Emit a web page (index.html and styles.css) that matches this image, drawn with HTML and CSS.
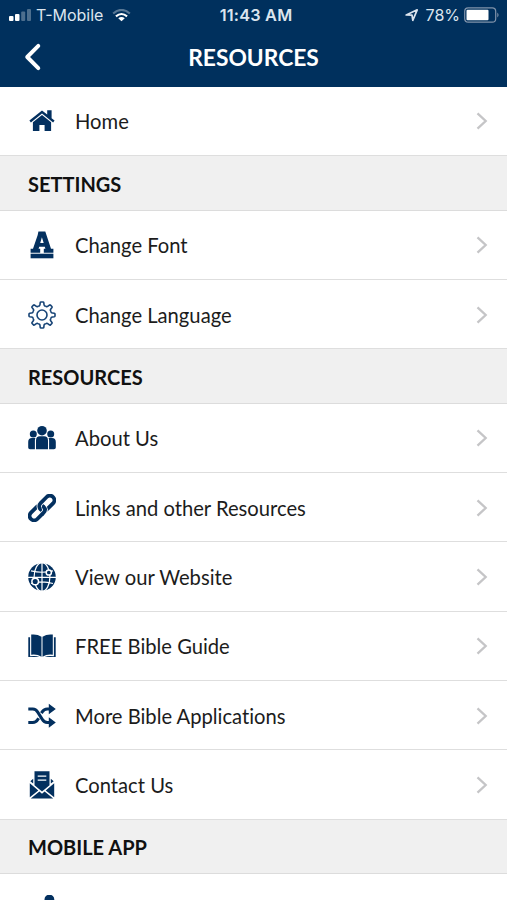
FILE: index.html
```html
<!DOCTYPE html>
<html lang="en">
<head>
<meta charset="utf-8">
<title>Resources</title>
<link rel="stylesheet" href="styles.css">
</head>
<body>
<svg class="defs" aria-hidden="true"><defs>
<symbol id="chevron" viewBox="0 0 12 18"><path d="M1.5 1.3 9.7 9l-8.2 7.7" fill="none" stroke="#c5c5c7" stroke-width="2.3"/></symbol>
<path id="tooth" d="M10.2 4.8Q11.8 5.4 12 3.5L12.2 1.7Q12.3 1 13 1H15Q15.7 1 15.8 1.7L16 3.5Q16.2 5.4 17.8 4.8"/>
</defs></svg>
<header class="top">
  <div class="status">
    <div class="carrier">
      <svg class="signal" viewBox="0 0 24 14"><g fill="#fff"><rect x="0" y="8" width="4.5" height="5" rx="1"/><rect x="6" y="6" width="4.5" height="7" rx="1"/></g><g fill="#fff" opacity=".3"><rect x="12.2" y="3.5" width="4" height="9.5" rx="1"/><rect x="18" y="1" width="4" height="12" rx="1"/></g></svg>
      <span>T-Mobile</span>
      <svg class="wifi" viewBox="0 0 20 14"><g fill="none" stroke="#fff" stroke-width="2.3"><path d="M1 4.9Q10-2.9 19 4.9" opacity=".35"/><path d="M4 7.9Q10 2.9 16 7.9"/></g><path d="M6.5 10q3.5-2.7 7 0L10 13.2z" fill="#fff"/></svg>
    </div>
    <span class="clock">11:43 AM</span>
    <div class="power">
      <svg class="location" viewBox="0 0 14 14"><path d="M1.2 7 12.2 1.8 7.8 12.3 7 7.2z" fill="none" stroke="#dbe4ee" stroke-width="1.7" stroke-linejoin="round"/></svg>
      <span>78%</span>
      <svg class="battery" viewBox="0 0 36 16"><rect x=".7" y=".8" width="31" height="14.4" rx="3.5" fill="none" stroke="#8093aa" stroke-width="1.2"/><rect x="2.5" y="2.7" width="22" height="10.6" rx="1" fill="#fff"/><path d="M33.3 5.5q2.5 2.5 0 5z" fill="#8093aa"/></svg>
    </div>
  </div>
  <div class="bar">
    <svg class="back" viewBox="0 0 18 28"><path d="M14.3 2.9 3.2 14 14.3 25.1" fill="none" stroke="#fff" stroke-width="3.9" stroke-linecap="round" stroke-linejoin="round"/></svg>
    <h1>RESOURCES</h1>
  </div>
</header>
<main>
  <a class="row"><svg class="icon" viewBox="0 0 28 28"><path d="M14 3.4 1.4 13.6l1.5 1.8L14 6.4l11.1 9 1.5-1.8-3-2.4V3.2h-4.4v4.4z"/><path d="M4.9 15.2 14 7.9l9.1 7.3v8.9h-6.5v-6h-5.2v6H4.9z"/></svg><span>Home</span><svg class="chev"><use href="#chevron"/></svg></a>
  <h2>SETTINGS</h2>
  <a class="row"><svg class="icon" viewBox="0 0 28 28"><path fill-rule="evenodd" d="M10.4.4h6.9L23 17.7h2.4v4H15.8v-4h1.6l-.6-2h-5.6l-.6 2h1.6v4H2.6v-4H5L9.7 3.9zM13.9 6.3 12.2 12h3.5z"/><path d="M2.6 22.7h22.8v4.6H2.6z"/></svg><span>Change Font</span><svg class="chev"><use href="#chevron"/></svg></a>
  <a class="row"><svg class="icon gear" viewBox="0 0 28 28"><use href="#tooth"/><use href="#tooth" transform="rotate(45 14 14)"/><use href="#tooth" transform="rotate(90 14 14)"/><use href="#tooth" transform="rotate(135 14 14)"/><use href="#tooth" transform="rotate(180 14 14)"/><use href="#tooth" transform="rotate(225 14 14)"/><use href="#tooth" transform="rotate(270 14 14)"/><use href="#tooth" transform="rotate(315 14 14)"/><circle cx="14" cy="14" r="5"/></svg><span>Change Language</span><svg class="chev"><use href="#chevron"/></svg></a>
  <h2>RESOURCES</h2>
  <a class="row"><svg class="icon" viewBox="0 0 28 28"><circle cx="14" cy="6.7" r="4.8"/><circle cx="5.3" cy="9.9" r="3.5"/><circle cx="22.7" cy="9.9" r="3.5"/><path d="M8 25.2V16.5q0-4.2 4-4.2h4q4 0 4 4.2v8.7zM6.9 25.2H2Q.2 25.2.2 23.5V18q0-4 3.8-4H7.4q-.5 1-.5 2.5zM21.1 25.2H26q1.8 0 1.8-1.7V18q0-4-3.8-4h-3.4q.5 1 .5 2.5z"/></svg><span>About Us</span><svg class="chev"><use href="#chevron"/></svg></a>
  <a class="row"><svg class="icon" viewBox="0 0 28 28"><g transform="rotate(-45 14 14)" fill="none" stroke="#03305f" stroke-width="3.8"><rect x="-1.6" y="9.5" width="17.6" height="9" rx="4.5"/><rect x="12" y="9.5" width="17.6" height="9" rx="4.5" stroke="#fff" stroke-width="5.4"/><rect x="12" y="9.5" width="17.6" height="9" rx="4.5"/><path d="M10.5 18.5h1q4.5 0 4.5-4.5" stroke="#fff" stroke-width="5.4"/><path d="M9.5 18.5h2q4.5 0 4.5-4.5v-.5"/></g></svg><span>Links and other Resources</span><svg class="chev"><use href="#chevron"/></svg></a>
  <a class="row"><svg class="icon" viewBox="0 0 28 28"><circle cx="14" cy="14" r="13.8"/><g fill="none" stroke="#fff" stroke-width="1.2"><path d="M14 0v28M0 14.3h28M3 7.8Q14 10.7 25 7.8M3 20.5q11-3.2 22 0"/><ellipse cx="14" cy="14" rx="7.9" ry="14.3"/></g><g fill="#03305f" stroke="#fff" stroke-width="1.5"><circle cx="20.8" cy="9.5" r="2.6"/><circle cx="7.2" cy="18.5" r="3.3"/></g></svg><span>View our Website</span><svg class="chev"><use href="#chevron"/></svg></a>
  <a class="row"><svg class="icon" viewBox="0 0 28 28"><path d="M3.2 2.6Q9 1.8 13.5 4.7v20Q9 22 3.2 22.8zM24.8 2.6Q19 1.8 14.5 4.7v20Q19 22 24.8 22.8z"/><path d="M.3 5.3h1.8v18.9Q8 23.3 11.4 25H.3zM27.7 5.3h-1.8v18.9Q20 23.3 16.6 25h11.1z"/></svg><span>FREE Bible Guide</span><svg class="chev"><use href="#chevron"/></svg></a>
  <a class="row"><svg class="icon" viewBox="0 0 28 28"><g fill="none" stroke="#03305f" stroke-width="3.1"><path d="M.3 7h4.5q3.1 0 5 3.2l4.4 7.1q1.9 3.2 5 3.2H22M.3 20.5h4.5q3.1 0 5-3l.8-1.3M13.4 11.1l.8-1.2q1.9-2.9 5-2.9H22"/></g><path d="M20.8 1.7 27.8 7l-7 5.3zM20.8 15.2l7 5.3-7 5.3z"/></svg><span>More Bible Applications</span><svg class="chev"><use href="#chevron"/></svg></a>
  <a class="row"><svg class="icon" viewBox="0 0 28 28"><path fill-rule="evenodd" d="M6.5.2h15v14.1L14 20.6 6.5 14.3zM9.7 4.4v1.4h8.6V4.4zm0 4v1.4h8.6V8.4z"/><path d="M5.2 7.8v4.8L2.3 10.3zM22.8 7.8v4.8l2.9-2.3zM1.8 12.3l8.5 7.3-8.5 6.7zM26.2 12.3l-8.5 7.3 8.5 6.7zM11.4 20.6l2.6 2.1 2.6-2.1 8.6 7H2.8z"/></svg><span>Contact Us</span><svg class="chev"><use href="#chevron"/></svg></a>
  <h2>MOBILE APP</h2>
  <a class="row last"><svg class="icon" viewBox="0 0 28 28"><circle cx="21.4" cy="4.5" r="4.9"/><path d="M13 12h16v16H13z"/></svg></a>
</main>
</body>
</html>
```
FILE: styles.css
```css
* { box-sizing: border-box; }
html, body { height: 900px; overflow: hidden; }
body { margin: 0; background: #fff; color: #1c1c1c; font-family: Lato, sans-serif; font-variant-ligatures: none; }
svg { display: block; flex: none; }
.defs { position: absolute; width: 0; height: 0; }
.top { height: 87px; background: #00305d; color: #fff; }
.status { display: grid; grid-template-columns: 1fr auto 1fr; height: 30px; align-items: center; padding: 0 7px 0 9px; font: 16px/30px Inter, sans-serif; color: #dce5ee; }
.carrier, .power { display: flex; align-items: center; }
.signal { width: 24px; height: 14px; margin-right: 3px; }
.wifi { width: 19px; height: 13px; margin-left: 9px; }
.clock { font-weight: 600; font-size: 16.3px; letter-spacing: .2px; padding-left: 3px; }
.power { justify-content: flex-end; }
.location { width: 14px; height: 14px; margin-right: 7px; }
.battery { width: 36px; height: 16px; margin-left: 4px; }
.bar { display: grid; grid-template-columns: 60px 1fr 60px; height: 57px; align-items: center; padding-bottom: 3px; }
.back { width: 18px; height: 28px; margin-left: 24px; }
h1 { margin: 0; text-align: center; font-size: 22.8px; font-weight: 700; line-height: 28px; }
.row { display: flex; align-items: center; height: 69.3px; padding: .6px 19.5px 0 27.5px; border-bottom: 1.5px solid #dedede; font-size: 20.2px; line-height: 28px; }
.row span { flex: 1; margin-left: 19.5px; white-space: nowrap; }
.icon { width: 28px; height: 28px; fill: #03305f; }
.gear { fill: none; stroke: #174476; stroke-width: 1.6; }
.chev { width: 12px; height: 18px; }
h2 { display: flex; align-items: center; height: 54.5px; margin: 0; padding: 1px 28px 0; background: #f0f0f0; border-bottom: 1.5px solid #dcdcdc; color: #111; font-size: 20px; font-weight: 700; }
.last { border: 0; padding-top: 0; }
```
